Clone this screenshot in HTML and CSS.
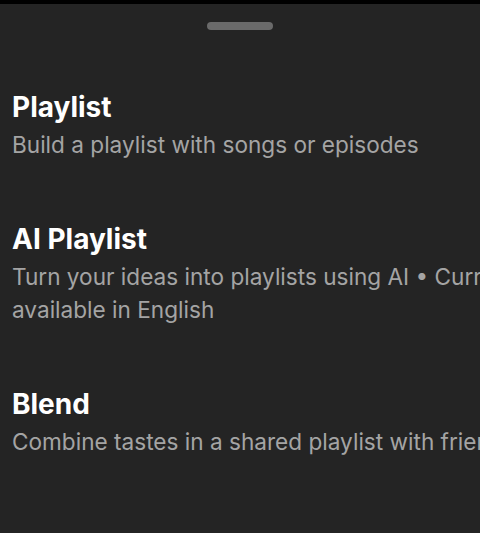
FILE: index.html
```html
<!DOCTYPE html>
<html lang="en">
<head>
<meta charset="utf-8">
<title>Create</title>
<link rel="stylesheet" href="styles.css">
</head>
<body>
<div class="status"></div>
<div class="sheet">
  <div class="handle-row"><div class="handle"></div></div>
  <ul class="options">
    <li class="option">
      <div class="title">Playlist</div>
      <div class="desc">Build a playlist with songs or episodes</div>
    </li>
    <li class="option">
      <div class="title">AI Playlist</div>
      <div class="desc">Turn your ideas into playlists using AI • Currently available in English</div>
    </li>
    <li class="option">
      <div class="title">Blend</div>
      <div class="desc">Combine tastes in a shared playlist with friends</div>
    </li>
  </ul>
</div>
</body>
</html>
```
FILE: styles.css
```css
html, body {
  margin: 0;
  padding: 0;
  height: 100%;
  overflow: hidden;
  background: #242424;
}
body {
  font-family: Inter, "Noto Sans", sans-serif;
  color: #fff;
}
.status {
  height: 4px;
  background: #000;
}
.sheet {
  width: 560px;
}
.handle-row {
  display: flex;
  justify-content: center;
  width: 480px;
  padding-top: 18px;
}
.handle {
  width: 66px;
  height: 8px;
  border-radius: 4px;
  background: #6a6a6a;
}
.options {
  list-style: none;
  margin: 0;
  padding: 60px 0 0 12px;
  display: flex;
  flex-direction: column;
  gap: 61px;
}
.title {
  font-size: 28px;
  font-weight: 700;
  line-height: 34px;
}
.desc {
  margin-top: 4px;
  font-size: 22.6px;
  line-height: 33px;
  color: #a4a4a4;
}
```
